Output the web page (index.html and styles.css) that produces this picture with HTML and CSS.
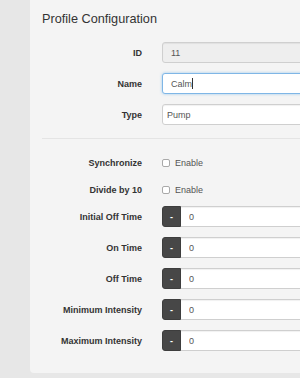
FILE: index.html
```html
<!DOCTYPE html>
<html lang="en">
<head>
  <meta charset="UTF-8">
  <title>Profile Configuration</title>
  <link rel="stylesheet" href="styles.css">
</head>
<body>
  <div class="panel">
    <h3 class="title">Profile Configuration</h3>

    <div class="row">
      <label class="label">ID</label>
      <input class="field disabled" type="text" value="11" disabled>
    </div>
    <div class="row">
      <label class="label">Name</label>
      <div class="field focus">Calm<span class="caret"></span></div>
    </div>
    <div class="row">
      <label class="label">Type</label>
      <select class="field select">
        <option>Pump</option>
      </select>
    </div>

    <hr class="divider">

    <div class="row check">
      <label class="label">Synchronize</label>
      <span class="box"></span><span class="check-text">Enable</span>
    </div>
    <div class="row check">
      <label class="label">Divide by 10</label>
      <span class="box"></span><span class="check-text">Enable</span>
    </div>

    <div class="row">
      <label class="label">Initial Off Time</label>
      <div class="group"><button class="minus">-</button><input class="field num" type="text" value="0"></div>
    </div>
    <div class="row">
      <label class="label">On Time</label>
      <div class="group"><button class="minus">-</button><input class="field num" type="text" value="0"></div>
    </div>
    <div class="row">
      <label class="label">Off Time</label>
      <div class="group"><button class="minus">-</button><input class="field num" type="text" value="0"></div>
    </div>
    <div class="row">
      <label class="label">Minimum Intensity</label>
      <div class="group"><button class="minus">-</button><input class="field num" type="text" value="0"></div>
    </div>
    <div class="row last">
      <label class="label">Maximum Intensity</label>
      <div class="group"><button class="minus">-</button><input class="field num" type="text" value="0"></div>
    </div>
  </div>
</body>
</html>
```

FILE: styles.css
```css
body {
  margin: 0;
  padding: 0;
  background: #e7e7e7;
  font-family: 'Liberation Sans', Arial, sans-serif;
  height: 378px;
  overflow: hidden;
}

.panel {
  box-sizing: border-box;
  width: 270px;
  margin-left: 30px;
  padding: 12px 0 22px 12px;
  background: #f4f4f4;
  border-radius: 0 0 0 4px;
  overflow: hidden;
}

.title {
  margin: 0 0 15px 0;
  font-size: 12.7px;
  line-height: 15px;
  font-weight: normal;
  color: #333;
}

.row {
  display: flex;
  align-items: center;
  height: 21px;
  margin-bottom: 10px;
  margin-right: -12px;
}

.row.check {
  height: 22px;
  margin-bottom: 5px;
}

.row.last {
  margin-bottom: 0;
}

.label {
  flex: none;
  width: 100px;
  margin-right: 20px;
  text-align: right;
  font-size: 9px;
  font-weight: bold;
  color: #333;
}

.field {
  box-sizing: border-box;
  flex: 1;
  min-width: 0;
  height: 21px;
  margin: 0;
  padding: 0 8px;
  border: 1px solid #cfcfcf;
  border-radius: 3px;
  background: #fff;
  font-family: 'Liberation Sans', Arial, sans-serif;
  font-size: 9px;
  color: #555;
  box-shadow: inset 0 1px 1px rgba(0, 0, 0, 0.06);
}

.field.disabled {
  background: #eee;
}

.field.focus {
  display: flex;
  align-items: center;
  border-color: #7fb6e6;
  box-shadow: 0 0 3px rgba(102, 175, 233, 0.6);
}

.caret {
  display: inline-block;
  width: 1px;
  height: 11px;
  background: #333;
}

.field.select {
  -webkit-appearance: none;
  appearance: none;
  padding-left: 4px;
}

.divider {
  margin: 13px 0 13px 0;
  border: 0;
  border-top: 1px solid #e4e4e4;
}

.box {
  box-sizing: border-box;
  flex: none;
  width: 8px;
  height: 8px;
  margin-right: 5px;
  border: 1px solid #a9a9a9;
  border-radius: 2px;
  background: #fff;
}

.check-text {
  font-size: 9px;
  color: #555;
}

.group {
  flex: 1;
  min-width: 0;
  display: flex;
  height: 21px;
}

.minus {
  flex: none;
  width: 19px;
  height: 21px;
  padding: 0;
  border: 1px solid #3d3d3d;
  border-radius: 3px 0 0 3px;
  background: #474747;
  color: #fff;
  font-family: 'Liberation Sans', Arial, sans-serif;
  font-size: 9px;
  font-weight: bold;
}

.field.num {
  border-left: 0;
  border-radius: 0 3px 3px 0;
}
```
